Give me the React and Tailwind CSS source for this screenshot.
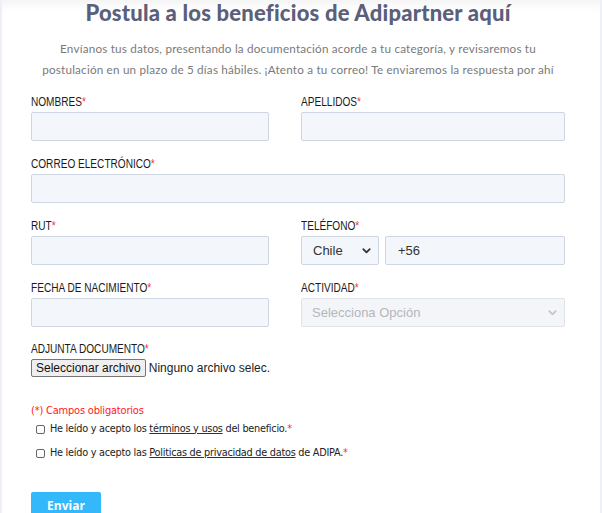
function Label({ children }) {
  return (
    <div className="h-[11px] mb-[5px] flex items-center">
      <span className="inline-block origin-left scale-x-[0.84] whitespace-nowrap text-[12px] text-[#1a1a1a] uppercase leading-none font-['Liberation_Sans',sans-serif]">
        {children}
        <span className="text-[#f0343f]">*</span>
      </span>
    </div>
  );
}

function Field({ label, children }) {
  return (
    <div>
      <Label>{label}</Label>
      {children ?? <div className="h-[29px] bg-[#f3f6fa] border border-[#cdd6e2] rounded-[2px]" />}
    </div>
  );
}

function Chevron({ className }) {
  return (
    <svg viewBox="0 0 12 12" className={className} fill="none" stroke="currentColor" strokeWidth="2" strokeLinecap="round" strokeLinejoin="round">
      <path d="M2.5 4.5 6 8l3.5-3.5" />
    </svg>
  );
}

export default function App() {
  return (
    <div className="min-h-[513px] bg-white border-l-2 border-r-2 border-[#eef0f7] shadow-[inset_0_10px_12px_-8px_rgba(0,0,0,0.07)] overflow-hidden">
      <div className="pl-[29px] pr-[35px]">
        {/* Heading */}
        <h1 className="text-center text-[22px] font-black text-[#5a607a] leading-[26px] font-['Lato',sans-serif] tracking-[0.2px]">
          Postula a los beneficios de Adipartner aquí
        </h1>
        <p className="mt-[12px] text-center text-[11.7px] leading-[21px] text-[#7a7a7a] font-['Lato',sans-serif] tracking-[0.2px]">
          Envíanos tus datos, presentando la documentación acorde a tu categoría, y revisaremos tu
          <br />
          postulación en un plazo de 5 días hábiles. ¡Atento a tu correo! Te enviaremos la respuesta por ahí
        </p>

        {/* Form */}
        <div className="mt-[16px] grid grid-cols-[238px_1fr] gap-x-[32px] gap-y-[17px]">
          <Field label="Nombres" />
          <Field label="Apellidos" />
          <div className="col-span-2">
            <Field label="Correo electrónico" />
          </div>
          <Field label="Rut" />
          <Field label="Teléfono">
            <div className="flex gap-[6px] h-[29px] font-['Liberation_Sans',sans-serif] text-[13px] text-[#333]">
              <div className="w-[78px] flex items-center justify-between pl-[11px] pr-[6px] bg-[#f3f6fa] border border-[#cdd6e2] rounded-[2px]">
                <span>Chile</span>
                <Chevron className="w-[11px] h-[11px] text-[#333]" />
              </div>
              <div className="flex-1 flex items-center pl-[12px] bg-[#f3f6fa] border border-[#cdd6e2] rounded-[2px]">
                +56
              </div>
            </div>
          </Field>
          <Field label="Fecha de nacimiento" />
          <Field label="Actividad">
            <div className="h-[29px] flex items-center justify-between pl-[10px] pr-[6px] bg-[#f3f5f9] border border-[#dfe3ea] rounded-[2px] font-['Liberation_Sans',sans-serif] text-[13px] text-[#b3b7bd]">
              <span>Selecciona Opción</span>
              <Chevron className="w-[11px] h-[11px] text-[#c2c6cc]" />
            </div>
          </Field>
        </div>

        <div className="mt-[16px]">
          <Label>Adjunta documento</Label>
          <div className="flex items-center gap-[3px] font-['Liberation_Sans',sans-serif] text-[12px] text-[#222]">
            <button className="h-[18px] px-[4px] bg-[#efefef] border border-[#767676] rounded-[2px] leading-none text-[12px] text-[#111]">
              Seleccionar archivo
            </button>
            <span>Ninguno archivo selec.</span>
          </div>
        </div>

        {/* Terms */}
        <p className="mt-[27px] h-[12px] flex items-center text-[11px] text-[#ff1a1a] font-['DejaVu_Sans_Condensed','DejaVu_Sans',sans-serif] tracking-[-0.2px] leading-none">
          (*) Campos obligatorios
        </p>
        <div className="mt-[7px] flex flex-col gap-[12px] pl-[5px] text-[10.8px] text-[#222] font-['DejaVu_Sans_Condensed','DejaVu_Sans',sans-serif] tracking-[-0.25px] leading-none">
          <div className="h-[12px] flex items-center gap-[5px]">
            <span className="w-[9px] h-[9px] border border-[#666] rounded-[2px] bg-white" />
            <span>
              He leído y acepto los{' '}
              <a className="underline text-[#222] decoration-[#333]">términos y usos</a> del beneficio.
              <span className="text-[#f0343f]">*</span>
            </span>
          </div>
          <div className="h-[12px] flex items-center gap-[5px]">
            <span className="w-[9px] h-[9px] border border-[#666] rounded-[2px] bg-white" />
            <span>
              He leído y acepto las{' '}
              <a className="underline text-[#222] decoration-[#333]">Politicas de privacidad de datos</a> de ADIPA.
              <span className="text-[#f0343f]">*</span>
            </span>
          </div>
        </div>

        <button className="mt-[33px] w-[70px] h-[36px] pt-[7px] flex justify-center items-start bg-[#33b8fb] rounded-t-[2px] text-white text-[12px] leading-[14px] font-bold font-['Open_Sans',sans-serif]">
          Enviar
        </button>
      </div>
    </div>
  );
}
